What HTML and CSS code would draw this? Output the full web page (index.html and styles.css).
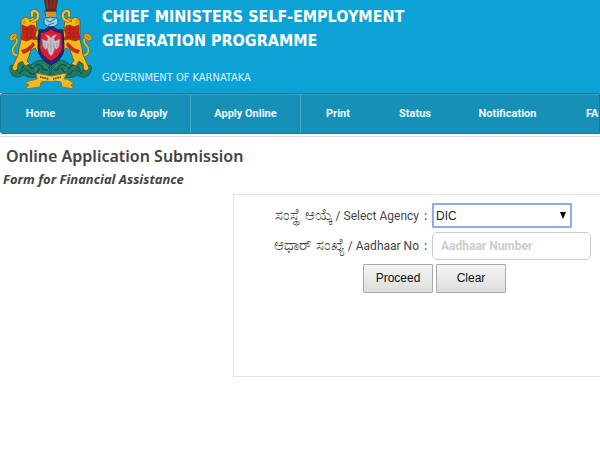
FILE: index.html
```html
<!DOCTYPE html>
<html lang="en">
<head>
<meta charset="utf-8">
<title>Chief Ministers Self-Employment Generation Programme</title>
<link rel="stylesheet" href="styles.css">
</head>
<body>
<header class="banner">
  <svg class="emblem" viewBox="0 0 100 95" role="img" aria-label="Karnataka emblem">
    <defs>
      <g id="beast">
        <path d="M20 55C12 57 11 49 15 45C19 40 16 36 11 39" fill="none" stroke="#7a6a20" stroke-width="2.6"/>
        <path d="M20 55C12 57 11 49 15 45C19 40 16 36 11 39" fill="none" stroke="#efb91b" stroke-width="1.7"/>
        <path d="M9 40Q9 34 15 33Q18 34 17 37Q16 40 12 41Z" fill="#d9a520" stroke="#75611c" stroke-width=".7"/>
        <path d="M12 38L15 35" stroke="#8a641d" stroke-width=".8"/>
        <path d="M21 27L21 20L25 17L30 19L33 17L36 21L37 27L36 31L41 29L42 33L37 36L38 42L41 51L39 54L35 48L31 50L29 56L27 61L30 64L25 66L22 61L18 64L17 70L14 71L12 68L15 61L18 55L19 48L21 40Z" fill="#f4ba18" stroke="#65521c" stroke-width=".8"/>
        <path d="M22 25L27 27L31 25L35 26L36 32L35 36L38 40L32 39L26 41L21 39L22 33Z" fill="#d0231c" stroke="#842a19" stroke-width=".7"/>
        <path d="M23 29L34 29M23 33L34 33M23 37L35 37M27 27V40M31 26V39" stroke="#962516" stroke-width=".7"/>
        <path d="M21 50Q28 49 33 42L35 45Q30 52 23 54Z" fill="#c32c1c"/>
        <path d="M33 21Q39 20 38 14Q36 9 32 12L32 16" fill="none" stroke="#715f23" stroke-width="3.2" stroke-linecap="round"/>
        <path d="M33 21Q39 20 38 14Q36 9 32 12L32 16" fill="none" stroke="#f5bd20" stroke-width="2.2" stroke-linecap="round"/>
        <path d="M22 20L25 19L26 23L23 25Z" fill="#dc9a20"/>
        <circle cx="30" cy="21" r=".8" fill="#3d3524"/>
      </g>
      <g id="leaves">
        <path d="M50 64C43 58 36 60 31 65C26 60 18 62 15 66C9 64 8 67 11 73C13 78 19 78 24 75C30 80 38 76 50 75Z" fill="#217b63" stroke="#0c5549" stroke-width=".8"/>
        <path d="M14 68Q19 74 23 67Q27 61 32 69Q39 60 43 69Q46 72 50 67M19 74Q26 66 30 73Q34 77 40 68" fill="none" stroke="#0b514e" stroke-width="1.2"/>
        <path d="M17 65Q22 68 19 71M32 65Q37 68 36 71M43 64Q48 69 49 70" fill="none" stroke="#45907d" stroke-width="1"/>
      </g>
    </defs>
    <path d="M44 0H58L56 11H46Z" fill="#5b2b28"/>
    <path d="M47 0L48 9M51 0V9M55 0L54 9" stroke="#ab2b26" stroke-width="1.5"/>
    <path d="M44 11H57M45 15H56" stroke="#392b4d" stroke-width="1.2"/>
    <path d="M46 12H56V17H46Z" fill="#da9226"/>
    <path d="M44 21Q44 17 48 18Q50 16 54 18Q58 17 58 21Q59 26 51 27Q43 26 44 21Z" fill="#9acfe9" stroke="#195c94"/>
    <path d="M46 20L50 22L55 19M48 25L54 23" stroke="#2778a8" fill="none"/>
    <use href="#leaves"/>
    <use href="#leaves" transform="matrix(-1 0 0 1 101 0)"/>
    <use href="#beast"/>
    <use href="#beast" transform="matrix(-1 0 0 1 101 0)"/>
    <path d="M39 30Q45 31 49 27H53Q57 31 63 30L64 48Q63 60 51 65Q39 60 38 48Z" fill="#20296f" stroke="#151d56"/>
    <path d="M41 33Q47 33 51 29Q55 33 61 33L62 48Q60 56 51 61Q42 56 40 48Z" fill="#e5192c"/>
    <path d="M45 35Q49 34 51 38Q53 34 57 35L54 38L55 41L60 39L59 47L56 50L55 48L53 54L51 56L49 54L47 48L46 50L43 47L42 39L47 41L48 38Z" fill="#c6c1cd" stroke="#8f7188" stroke-width=".7"/>
    <path d="M45 42V48M48 43V48M54 43V48M57 42V48M51 40V52" stroke="#8b8297" stroke-width=".7"/>
    <path d="M36 73L51 76L67 73L64 79H67L74 83L71 85L74 89L62 87L61 82L51 80L41 82L40 87L25 89L29 85L25 82L37 79Z" fill="#efb828" stroke="#826b1c" stroke-width=".8"/>
    <path d="M38 74L51 78L64 74L62 80L51 81L40 80Z" fill="#f7cc45"/>
    <path d="M40 77L49 79M53 79L61 77" stroke="#6c501c" stroke-width="2" stroke-dasharray="1.5 .7"/>
  </svg>
  <div class="titles">
    <h1>CHIEF MINISTERS SELF-EMPLOYMENT<br>GENERATION PROGRAMME</h1>
    <p>GOVERNMENT OF KARNATAKA</p>
  </div>
</header>
<nav class="menu" aria-label="Main">
  <a href="#">Home</a>
  <a href="#" class="divided">How to Apply</a>
  <a href="#" class="divided">Apply Online</a>
  <a href="#">Print</a>
  <a href="#">Status</a>
  <a href="#">Notification</a>
  <a href="#">FAQ</a>
</nav>
<main>
  <h2>Online Application Submission</h2>
  <h3>Form for Financial Assistance</h3>
  <form class="panel">
    <label for="agency"><span class="kn" lang="kn">ಸಂಸ್ಥೆ ಆಯ್ಕೆ</span> / Select Agency</label>
    <span class="colon">:</span>
    <div class="choice">
      <select id="agency"><option>DIC</option></select>
      <svg class="arrow" viewBox="0 0 6 7" aria-hidden="true"><path d="M0 0H6L3 7Z"/></svg>
    </div>
    <label for="aadhaar"><span class="kn" lang="kn">ಆಧಾರ್ ಸಂಖ್ಯೆ</span> / Aadhaar No</label>
    <span class="colon">:</span>
    <input id="aadhaar" type="text" placeholder="Aadhaar Number">
    <div class="actions">
      <button type="button">Proceed</button>
      <button type="reset">Clear</button>
    </div>
  </form>
</main>
</body>
</html>
```
FILE: styles.css
```css
* { box-sizing: border-box; }
body {
  margin: 0;
  overflow-x: hidden;
  background: #fff;
  color: #444;
  font-family: "Noto Sans", "Open Sans", sans-serif;
}
h1, h2, h3, p { margin: 0; }
.banner {
  display: flex;
  height: 93px;
  background: #0da2d5;
  color: #fff;
}
.emblem { width: 100px; height: 95px; flex: none; }
.titles { padding: 5px 0 0 2px; white-space: nowrap; }
.titles h1 {
  font: bold 16px/24px "DejaVu Sans Condensed", "DejaVu Sans", sans-serif;
}
.titles p {
  margin-top: 17px;
  color: #d8f2fb;
  font: 11px/16px "DejaVu Sans Condensed", "DejaVu Sans", sans-serif;
}
.menu {
  display: grid;
  grid-template-columns: 79px 111px 110px 74px 80px 105px 72px;
  height: 41px;
  background: #1790b8;
  border: 1px solid #147a9d;
  border-radius: 3px 0 0 3px;
  box-shadow: inset 0 1px #3ba0c2;
  overflow: hidden;
}
.menu a {
  color: #eff9fc;
  font: bold 11px/40px Roboto, sans-serif;
  text-align: center;
  text-decoration: none;
  white-space: nowrap;
}
.menu .divided { border-right: 1px solid #4aa9c8; }
main { margin-top: 2px; border-top: 1px solid #ddd; }
h2 {
  padding: 7px 0 0 6px;
  font: 600 16px/24px "Noto Sans", sans-serif;
}
h3 {
  padding-left: 3px;
  font: italic bold 13px/22px "Noto Sans", sans-serif;
}
.panel {
  display: grid;
  grid-template-columns: 185px 13px 1fr;
  grid-template-rows: 25px 27px 30px;
  row-gap: 4px;
  align-items: center;
  min-height: 183px;
  margin: 4px -20px 0 233px;
  padding-top: 8px;
  border: 1px solid #e2e0e0;
}
.panel label {
  justify-self: end;
  font: 12px/24px Roboto, "Noto Sans", sans-serif;
  white-space: nowrap;
}
.kn { font-size: 15px; }
.colon { text-align: center; font-size: 12px; }
.choice { position: relative; width: 140px; }
select {
  display: block;
  width: 100%;
  height: 25px;
  padding: 0 2px;
  appearance: none;
  border: 2px solid #8aaeed;
  border-radius: 1px;
  background: #fff;
  color: #222;
  font: 12px "Liberation Sans", sans-serif;
}
.arrow {
  position: absolute;
  right: 6px;
  top: 9px;
  width: 6px;
  height: 7px;
}
input {
  width: 159px;
  height: 28px;
  padding: 0 8px;
  border: 1px solid #ccc;
  border-radius: 5px;
  font: bold 12px Roboto, "Noto Sans", sans-serif;
}
input::placeholder { color: #ccc; opacity: 1; }
.actions { grid-column: 1 / -1; display: flex; gap: 3px; padding-left: 129px; }
button {
  width: 70px;
  height: 29px;
  padding: 0;
  border: 1px solid #aaa;
  border-radius: 1px;
  background: linear-gradient(#f5f5f5, #ddd);
  color: #111;
  font: 12px "Liberation Sans", sans-serif;
}
```
